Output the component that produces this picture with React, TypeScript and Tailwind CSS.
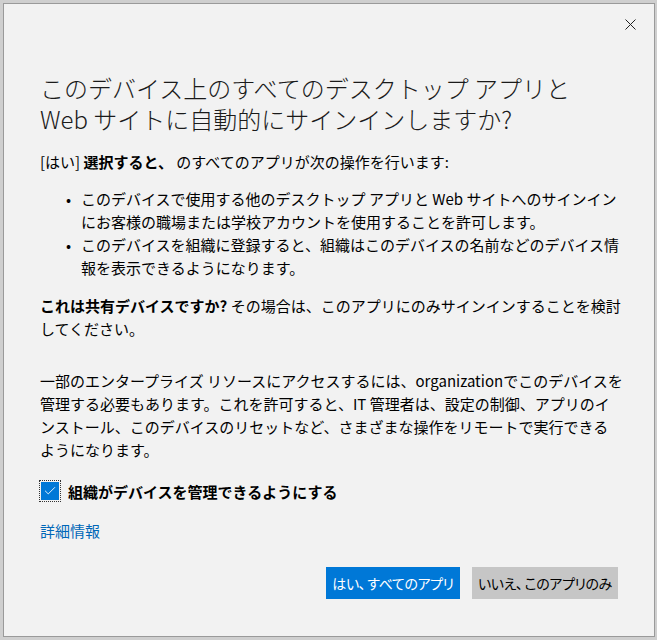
import { Check } from "lucide-react";

const font = {
  fontFamily: '"Noto Sans CJK JP", "Noto Sans", sans-serif',
};

function Bullet({ lines }: { lines: string[] }) {
  return (
    <div className="flex">
      <span className="w-[15px] ml-[26px] shrink-0">•</span>
      <div>
        {lines.map((l) => (
          <div key={l} className="whitespace-nowrap">
            {l}
          </div>
        ))}
      </div>
    </div>
  );
}

const palt = { fontFeatureSettings: '"palt"' };

export default function App() {
  return (
    <div className="w-[657px] h-[640px] bg-[#cfcfcf] pt-[3px] pl-[3px] overflow-hidden" style={font}>
      <div className="w-[652px] h-[634px] bg-[#f2f2f2] border border-[#9a9a9a] flex flex-col text-black">
        {/* close */}
        <div className="flex justify-end pt-[11px] pr-[18px] h-[20px]">
          <svg width="11" height="11" viewBox="0 0 11 11" className="mt-[4px]">
            <path d="M0.5 0.5L10.5 10.5M10.5 0.5L0.5 10.5" stroke="#222" strokeWidth="1" />
          </svg>
        </div>

        <div className="pl-[36px] pr-[34px]">
          <h1 className="mt-[48px] text-[24px] leading-[31px] font-light whitespace-nowrap text-[#1a1a1a]">
            <div>このデバイス上のすべてのデスクトップ アプリと</div>
            <div>Web サイトに自動的にサインインしますか?</div>
          </h1>

          <div className="text-[15px] leading-[23px]">
            <p className="mt-[16px] whitespace-nowrap">
              [はい] <span className="font-bold">選択すると、</span> のすべてのアプリが次の操作を行います:
            </p>

            <div className="mt-[14px]">
              <Bullet
                lines={[
                  "このデバイスで使用する他のデスクトップ アプリと Web サイトへのサインイン",
                  "にお客様の職場または学校アカウントを使用することを許可します。",
                ]}
              />
              <Bullet
                lines={[
                  "このデバイスを組織に登録すると、組織はこのデバイスの名前などのデバイス情",
                  "報を表示できるようになります。",
                ]}
              />
            </div>

            <p className="mt-[15px] whitespace-nowrap">
              <span className="font-bold">これは共有デバイスですか?</span> その場合は、このアプリにのみサインインすることを検討
              <br />
              してください。
            </p>

            <p className="mt-[29px] whitespace-nowrap">
              一部のエンタープライズ リソースにアクセスするには、organizationでこのデバイスを
              <br />
              管理する必要もあります。これを許可すると、IT 管理者は、設定の制御、アプリのイ
              <br />
              ンストール、このデバイスのリセットなど、さまざまな操作をリモートで実行できる
              <br />
              ようになります。
            </p>

            <label className="mt-[20px] flex items-center h-[20px]">
              <span className="w-[20px] h-[20px] outline outline-1 outline-dotted outline-[#333] flex items-center justify-center">
                <span className="w-[18px] h-[18px] bg-[#0078d7] flex items-center justify-center">
                  <Check className="w-[14px] h-[14px] text-white" strokeWidth={1.5} />
                </span>
              </span>
              <span className="ml-[8px] font-bold">組織がデバイスを管理できるようにする</span>
            </label>

            <a className="block mt-[18px] text-[#0067b8] cursor-pointer">詳細情報</a>
          </div>

          <div className="mt-[25px] flex justify-end gap-[12px] pr-[2px]">
            <button
              className="w-[134px] h-[32px] bg-[#0078d7] text-white text-[14px] tracking-[-0.4px] whitespace-nowrap"
              style={palt}
            >
              はい、<span className="ml-[2px]">すべてのアプリ</span>
            </button>
            <button
              className="w-[146px] h-[32px] bg-[#c6c6c6] text-black text-[14px] tracking-[-0.4px] whitespace-nowrap"
              style={palt}
            >
              いいえ、<span className="ml-[2px]">このアプリのみ</span>
            </button>
          </div>
        </div>
      </div>
    </div>
  );
}
